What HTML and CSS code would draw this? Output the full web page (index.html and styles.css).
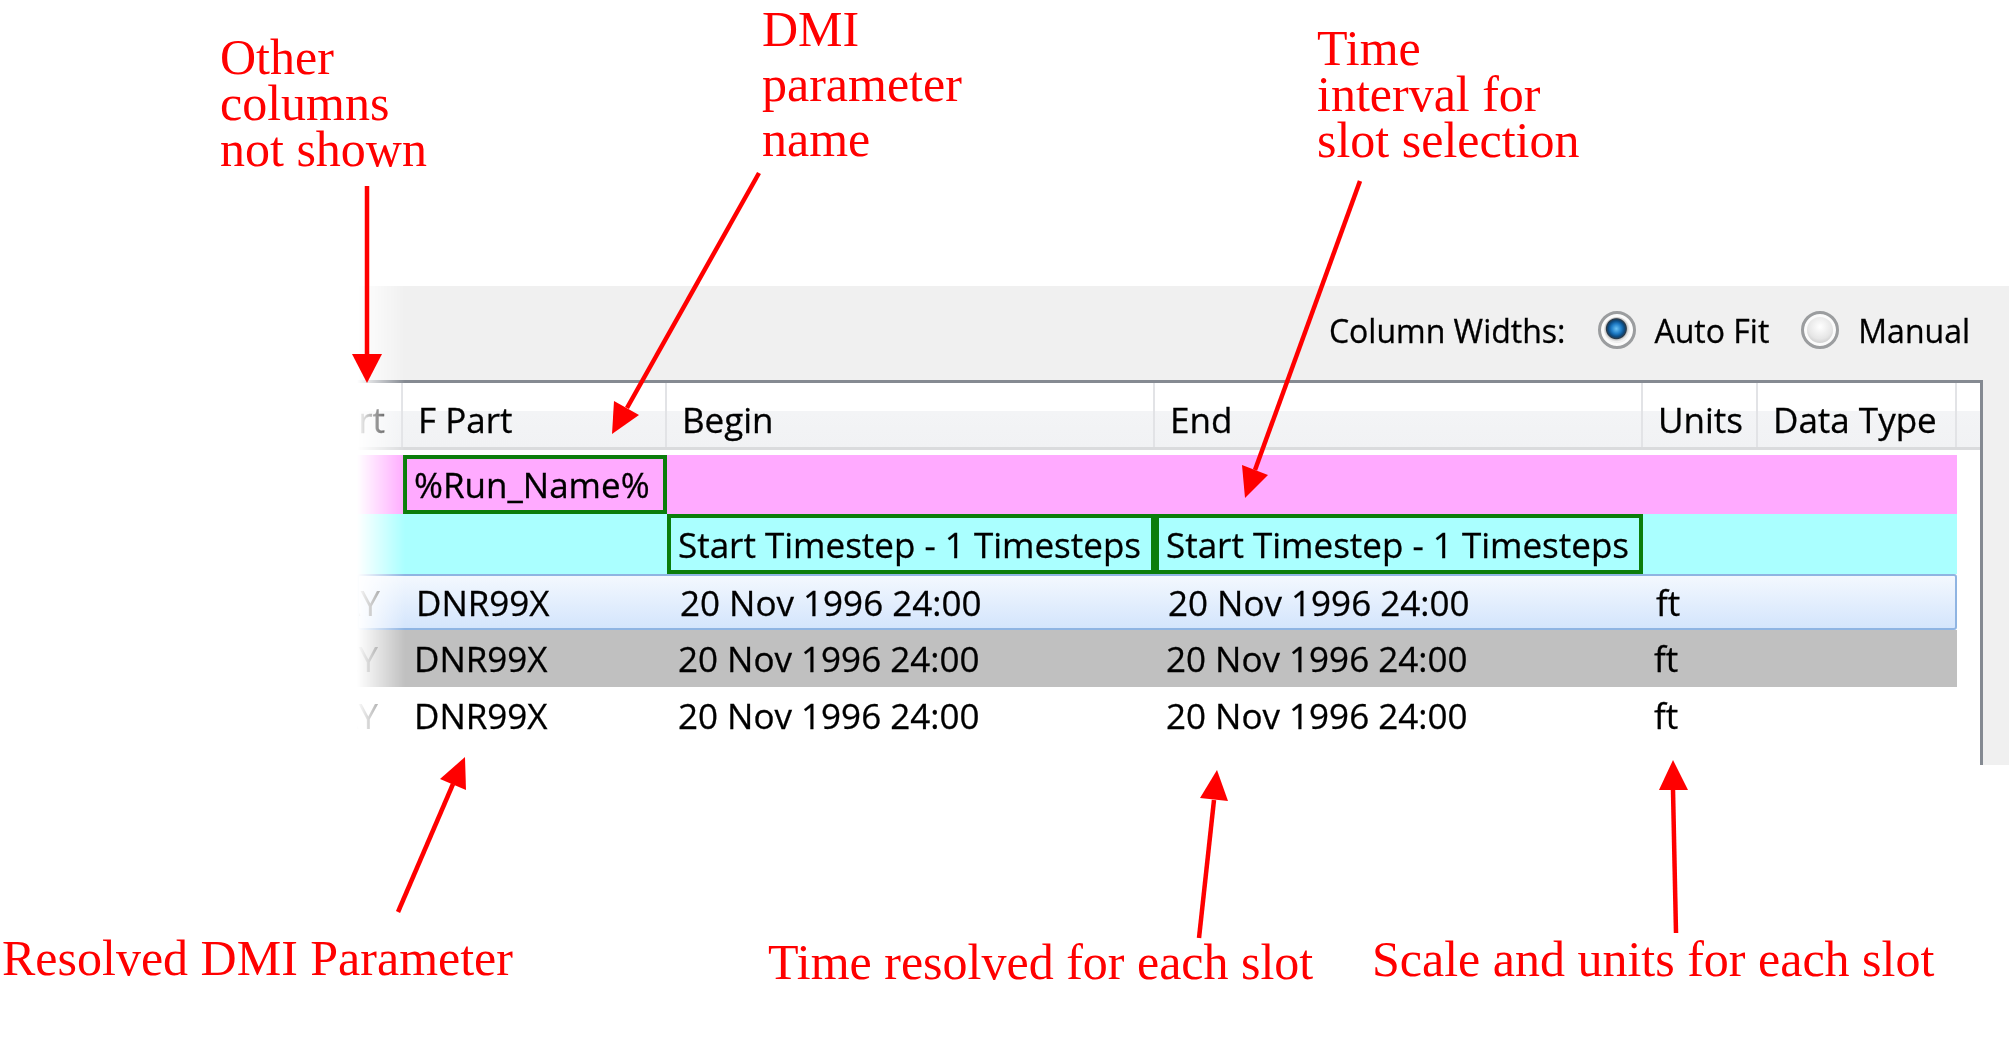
FILE: index.html
```html
<!DOCTYPE html>
<html lang="en">
<head>
  <meta charset="UTF-8">
  <title>DMI slot selection</title>
  <link rel="stylesheet" href="styles.css">
</head>
<body>

<div class="figure">
  <!-- callouts -->
  <div class="note note-other">Other<br>columns<br>not shown</div>
  <div class="note note-dmi">DMI<br>parameter<br>name</div>
  <div class="note note-time">Time<br>interval for<br>slot selection</div>
  <div class="note note-resolved">Resolved DMI Parameter</div>
  <div class="note note-slot">Time resolved for each slot</div>
  <div class="note note-units">Scale and units for each slot</div>

  <svg class="arrows" width="2009" height="1046" viewBox="0 0 2009 1046">
    <g stroke="#ff0000" stroke-width="4.5" stroke-linecap="butt">
      <line x1="367" y1="186" x2="367" y2="356"/>
      <line x1="759" y1="173" x2="627" y2="408"/>
      <line x1="1360" y1="181" x2="1255" y2="470"/>
      <line x1="398" y1="912" x2="453" y2="784"/>
      <line x1="1199" y1="938" x2="1214" y2="800"/>
      <line x1="1676" y1="933" x2="1673" y2="790"/>
    </g>
    <g fill="#ff0000">
      <polygon points="367,383 352,354 382,354"/>
      <polygon points="612,434 639,415 614,401"/>
      <polygon points="1245,498 1268,475 1242,465"/>
      <polygon points="465,757 466,790 440,779"/>
      <polygon points="1217,770 1228,801 1200,798"/>
      <polygon points="1673,760 1688,790 1659,790"/>
    </g>
  </svg>

  <!-- ventana de la tabla -->
  <div class="window">
    <div class="toolbar">
      <span class="toolbar-label">Column Widths:</span>
      <span class="radio"><span class="dot on"></span>Auto Fit</span>
      <span class="radio"><span class="dot"></span>Manual</span>
    </div>

    <div class="table">
      <div class="row head">
        <div class="cell cut">E Part</div>
        <div class="cell">F Part</div>
        <div class="cell">Begin</div>
        <div class="cell">End</div>
        <div class="cell">Units</div>
        <div class="cell">Data Type</div>
        <div class="cell filler"></div>
      </div>

      <div class="rows">
        <div class="row pink">
          <div class="cell"></div>
          <div class="cell boxed">%Run_Name%</div>
          <div class="cell"></div>
          <div class="cell"></div>
          <div class="cell"></div>
          <div class="cell"></div>
        </div>
        <div class="row cyan">
          <div class="cell"></div>
          <div class="cell"></div>
          <div class="cell boxed">Start Timestep - 1 Timesteps</div>
          <div class="cell boxed">Start Timestep - 1 Timesteps</div>
          <div class="cell"></div>
          <div class="cell"></div>
        </div>
        <div class="row selected">
          <div class="cell cut ghost">1DAY</div>
          <div class="cell">DNR99X</div>
          <div class="cell">20 Nov 1996 24:00</div>
          <div class="cell">20 Nov 1996 24:00</div>
          <div class="cell">ft</div>
          <div class="cell"></div>
        </div>
        <div class="row grey">
          <div class="cell cut ghost">1DAY</div>
          <div class="cell">DNR99X</div>
          <div class="cell">20 Nov 1996 24:00</div>
          <div class="cell">20 Nov 1996 24:00</div>
          <div class="cell">ft</div>
          <div class="cell"></div>
        </div>
        <div class="row plain">
          <div class="cell cut ghost">1DAY</div>
          <div class="cell">DNR99X</div>
          <div class="cell">20 Nov 1996 24:00</div>
          <div class="cell">20 Nov 1996 24:00</div>
          <div class="cell">ft</div>
          <div class="cell"></div>
        </div>
      </div>
    </div>
  </div>
</div>

</body>
</html>
```

FILE: styles.css
```css
* {
  box-sizing: border-box;
}

html, body {
  margin: 0;
  background: #fff;
  overflow: hidden;
}

.figure {
  position: relative;
  width: 2009px;
  height: 1046px;
  padding: 286px 0 0 357px;
}

/* callouts */
.note {
  position: absolute;
  font-family: "Liberation Serif", "Times New Roman", serif;
  font-size: 50px;
  line-height: 46px;
  color: #ff0000;
  white-space: nowrap;
}

.note-other { left: 220px; top: 34px; }
.note-dmi { left: 762px; top: 2px; line-height: 55px; }
.note-time { left: 1317px; top: 25px; }
.note-resolved { left: 2px; top: 935px; }
.note-slot { left: 768px; top: 939px; }
.note-units { left: 1372px; top: 936px; }

.arrows {
  position: absolute;
  left: 0;
  top: 0;
  z-index: 2;
  pointer-events: none;
}

/* window */
.window {
  width: 1652px;
  height: 479px;
  background: #f0f0f0;
  overflow: hidden;
  font-family: "Open Sans", "Noto Sans", sans-serif;
  font-size: 35px;
  color: #000;
  -webkit-text-stroke: 0.3px #000;
  -webkit-mask-image: linear-gradient(to right, transparent 0, #000 48px);
  mask-image: linear-gradient(to right, transparent 0, #000 48px);
}

.toolbar {
  height: 94px;
  display: flex;
  align-items: center;
  justify-content: flex-end;
  padding: 0 39px 6px 0;
  font-size: 32px;
}

.toolbar-label {
  margin-right: 32px;
}

.radio {
  display: flex;
  align-items: center;
}

.radio + .radio {
  margin-left: 32px;
}

.dot {
  width: 38px;
  height: 38px;
  margin-right: 19px;
  border-radius: 50%;
  border: 3px solid #9b9d9f;
  box-shadow: inset 0 0 0 3px #fbfbfb;
  background: radial-gradient(circle at 50% 40%, #ffffff 0, #e6e6e6 12px, #d2d2d2 16px);
}

.dot.on {
  background: radial-gradient(circle at 48% 46%, #6cc3f5 0, #1f7cc6 5px, #0c4b82 8px, #2b3a48 10px, #c9c9c9 11px, #f3f3f3 13px, #e2e2e2 16px);
}

/* table */
.table {
  width: 1626px;
  height: 385px;
  background: #fff;
  border-top: 3px solid #858a92;
  border-right: 3px solid #858a92;
}

.row {
  display: grid;
  grid-template-columns: 46px 264px 488px 488px 115px 199px;
  width: 1600px;
}

.cell {
  display: flex;
  align-items: center;
  padding-left: 11px;
  white-space: nowrap;
  overflow: hidden;
}

.cut {
  justify-content: flex-end;
  padding: 0 25px 0 0;
}

.head {
  grid-template-columns: 46px 264px 488px 488px 115px 199px 23px;
  width: 1623px;
  height: 67px;
  border-bottom: 3px solid #dadbdd;
  background: linear-gradient(#ffffff 0, #ffffff 44%, #f3f4f6 44%, #f1f2f4 100%);
}

.head .cell {
  padding: 9px 0 0 15px;
  border-right: 2px solid #e2e3e6;
}

.head .cut {
  padding: 9px 16px 0 0;
}

.head .filler {
  border-right: none;
}

.rows {
  padding-top: 5px;
}

.ghost {
  color: #555;
  -webkit-text-stroke: 0;
}

.pink {
  height: 59px;
  background: #ffaaff;
}

.cyan {
  height: 60px;
  background: #aaffff;
}

.boxed {
  border: 4px solid #0b7d0b;
  padding-left: 7px;
}

.selected {
  height: 56px;
  border: 2px solid #8fb4e2;
  border-radius: 3px;
  background: linear-gradient(#f3f8fe, #d4e5fc);
}

.grey {
  height: 57px;
  background: #c0c0c0;
}

.plain {
  height: 56px;
}
```
